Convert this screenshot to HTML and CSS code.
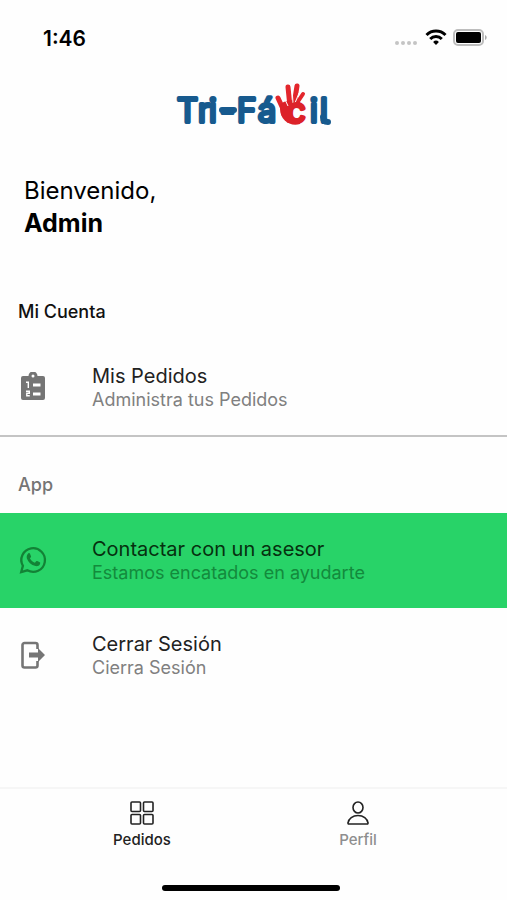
FILE: index.html
```html
<!DOCTYPE html>
<html lang="es">
<head>
    <meta charset="UTF-8">
    <meta name="viewport" content="width=device-width, initial-scale=1">
    <title>Tri-Fácil</title>
    <link rel="stylesheet" href="styles.css">
</head>
<body>
    <div class="status-bar">
        <span class="time">1:46</span>
        <div class="status-icons">
            <svg width="24" height="20" viewBox="0 0 24 20" fill="#c4c4c4">
                <circle cx="2" cy="15" r="2"/>
                <circle cx="8" cy="15" r="2"/>
                <circle cx="14" cy="15" r="2"/>
                <circle cx="20" cy="15" r="2"/>
            </svg>
            <svg width="22" height="20" viewBox="0 0 22 20" fill="none" stroke="#000" stroke-width="3">
                <path d="M1.500 7a13.500 13.500 0 0 1 19 0"/>
                <path d="M5.200 11a8.200 8.200 0 0 1 11.600 0"/>
                <path d="M11 17l-2.900-3a4.200 4.200 0 0 1 5.800 0z" fill="#000" stroke="none"/>
            </svg>
            <svg width="34" height="20" viewBox="0 0 34 20">
                <rect x="1" y="2" width="29" height="15" rx="4" fill="#fff" stroke="#bdbdbd" stroke-width="2"/>
                <rect x="3" y="4" width="25" height="11" rx="2"/>
                <path d="M32 7v5c1-.4 1.700-1.400 1.700-2.500S33 7.400 32 7z" fill="#aaa"/>
            </svg>
        </div>
    </div>

    <header class="logo">
        <svg width="156" height="52" viewBox="0 0 156 52">
            <text class="logo-text" x="1 22 33 44 61 82" y="39">Tri-Fá</text>
            <path class="logo-stroke" d="M46 27h12"/>
            <!-- mano -->
            <g fill="none" stroke="#e3262c" stroke-linecap="round">
                <path d="M108 28l-6-13" stroke-width="5"/>
                <path d="M114 24l-2-20" stroke-width="5"/>
                <path d="M118 22l3-19" stroke-width="5"/>
                <path d="M121 20l6-9" stroke-width="4"/>
            </g>
            <path d="M104 22c4-5 14-6 20-3v22c-10 3-20-4-20-15z" fill="#dc2229"/>
            <path d="M107 12l5 11M116 5l1 15M123 10l-4 10" fill="none" stroke="#fefefe" stroke-width="1"/>
            <ellipse cx="123" cy="29" rx="8" ry="8" fill="#fefefe"/>
            <text class="logo-text red" x="111" y="39">c</text>
            <text class="logo-text" x="134 144" y="39">il</text>
            <path class="logo-stroke" d="M147 34q0 5 5 5"/>
        </svg>
    </header>

    <main>
        <h1 class="greeting">Bienvenido,<br><strong>Admin</strong></h1>

        <section>
            <h2 class="section-title active">Mi Cuenta</h2>
            <button class="item" type="button">
                <svg class="item-icon" viewBox="0 0 32 32">
                    <path d="M6 4h5.500a4.500 4.500 0 0 1 9 0H26a2 2 0 0 1 2 2v20a2 2 0 0 1-2 2H6a2 2 0 0 1-2-2V6a2 2 0 0 1 2-2z" fill="#757575"/>
                    <circle cx="16" cy="4" r="1.500" fill="#fff"/>
                    <path d="M9 10.300h2.300V16M9 19.300h3.300v1.900H9.800v2.500h3" fill="none" stroke="#fff" stroke-width="1.400"/>
                    <path d="M16 13h7.500M16 22h7.500" stroke="#fff" stroke-width="3"/>
                </svg>
                <span class="item-text">
                    <span class="item-name">Mis Pedidos</span>
                    <span class="item-desc">Administra tus Pedidos</span>
                </span>
            </button>
        </section>

        <section class="app-section">
            <h2 class="section-title">App</h2>
            <button class="item whatsapp" type="button">
                <svg class="item-icon" viewBox="0 1 32 32">
                    <path d="M4.200 28l1.700-6.100A11.800 11.800 0 1 1 10.300 26.300z" fill="none" stroke="#138236" stroke-width="2.300"/>
                    <path d="M11.200 9.500c.6-.6 1.500-.5 1.800.2l1 2.500c.2.500-.1 1.100-1.100 2.100 1.100 2.200 2.700 3.600 5 4.500l1.300-1.500c.3-.4.7-.4 1.100-.2l2.400 1.200c.7.300.6.800.3 1.700-.6 1.700-2.700 2.500-4.400 2.100-4.700-1.100-7.400-4-8.700-7.600-.6-1.900 0-3.700 1.300-5z" fill="#138236"/>
                </svg>
                <span class="item-text">
                    <span class="item-name">Contactar con un asesor</span>
                    <span class="item-desc">Estamos encatados en ayudarte</span>
                </span>
            </button>
            <button class="item" type="button">
                <svg class="item-icon" viewBox="0 1 32 32">
                    <path d="M20.500 10V6a2 2 0 0 0-2-2H7.500a2 2 0 0 0-2 2v20.500a2 2 0 0 0 2 2h11a2 2 0 0 0 2-2V22" fill="none" stroke="#757575" stroke-width="2.600"/>
                    <path d="M12 13.500h9V9l7 7-7 7v-4.500h-9z" fill="#757575"/>
                </svg>
                <span class="item-text">
                    <span class="item-name">Cerrar Sesión</span>
                    <span class="item-desc">Cierra Sesión</span>
                </span>
            </button>
        </section>
    </main>

    <nav class="tabs">
        <a class="tab active" href="#pedidos">
            <svg width="24" height="24" viewBox="0 0 24 24" fill="none" stroke="#222" stroke-width="1.600">
                <rect x="1" y="1" width="9.500" height="9.500" rx="1"/>
                <rect x="13.500" y="1" width="9.500" height="9.500" rx="1"/>
                <rect x="1" y="13.500" width="9.500" height="9.500" rx="1"/>
                <rect x="13.500" y="13.500" width="9.500" height="9.500" rx="1"/>
            </svg>
            Pedidos
        </a>
        <a class="tab" href="#perfil">
            <svg width="24" height="24" viewBox="0 0 24 24" fill="none" stroke="#222" stroke-width="1.600">
                <ellipse cx="12" cy="6.500" rx="5" ry="5.500"/>
                <path d="M2.800 23c-.6 0-.9-.4-.8-1 .5-4.500 4.800-7.500 10-7.500s9.500 3 10 7.500c.1.600-.2 1-.8 1z"/>
            </svg>
            Perfil
        </a>
    </nav>
    <div class="home-bar">
        <div class="home-indicator"></div>
    </div>
</body>
</html>
```
FILE: styles.css
```css
* {
    box-sizing: border-box;
}
body {
    margin: 0;
    min-height: 100vh;
    display: flex;
    flex-direction: column;
    background-color: #fefefe;
    color: #000;
    font-family: Inter, Roboto, sans-serif;
}
h1, h2 {
    margin: 0;
}

/* barra de estado */
.status-bar {
    display: flex;
    align-items: center;
    justify-content: space-between;
    height: 76px;
    padding: 0 20px 0 43px;
}
.time {
    font-size: 21px;
    font-weight: 600;
}
.status-icons {
    display: flex;
    gap: 6px;
}

/* logo */
.logo {
    display: flex;
    justify-content: center;
    height: 60px;
    padding-top: 7px;
}
.logo-text {
    fill: #175a8e;
    stroke: #175a8e;
    stroke-width: 4px;
    stroke-linejoin: round;
    font-size: 33px;
    font-weight: 300;
}
.logo-text.red {
    fill: #dc2229;
    stroke: #dc2229;
}
.logo-stroke {
    fill: none;
    stroke: #175a8e;
    stroke-width: 6px;
    stroke-linecap: round;
}

.greeting {
    padding: 39px 24px 44px;
    font-size: 24px;
    font-weight: 400;
    line-height: 32px;
}
.greeting strong {
    font-size: 25px;
    font-weight: 700;
}

.section-title {
    padding: 0 18px;
    font-size: 18px;
    font-weight: 500;
    line-height: 56px;
    color: #757575;
}
.section-title.active {
    color: #111;
}
.app-section {
    padding-top: 20px;
    border-top: 2px solid #c4c4c4;
}

/* opciones del menu */
.item {
    display: flex;
    align-items: center;
    gap: 43px;
    width: 100%;
    padding: 24px 17px 23px;
    border: 0;
    background: none;
    color: #222;
    font: inherit;
    text-align: left;
}
.item-icon {
    width: 32px;
    height: 32px;
    flex: none;
}
.item-text {
    display: flex;
    flex-direction: column;
    line-height: 24px;
}
.item-name {
    font-size: 20px;
}
.item-desc {
    font-size: 18px;
    color: #808080;
}
.whatsapp {
    background-color: #28d368;
    color: #06300f;
}
.whatsapp .item-desc {
    color: #138a3c;
}

/* pestañas */
.tabs {
    display: flex;
    margin-top: auto;
    padding: 12px 41px 34px 34px;
    border-top: 2px solid #f6f6f6;
}
.tab {
    flex: 1;
    display: flex;
    flex-direction: column;
    align-items: center;
    gap: 4px;
    color: #8e8e8e;
    font-size: 15px;
    font-weight: 500;
    line-height: 22px;
    text-decoration: none;
}
.tab.active {
    color: #222;
}
.home-bar {
    padding: 0 5px 9px 0;
}
.home-indicator {
    width: 178px;
    height: 6px;
    margin: 0 auto;
    border-radius: 3px;
    background-color: #000;
}
```
